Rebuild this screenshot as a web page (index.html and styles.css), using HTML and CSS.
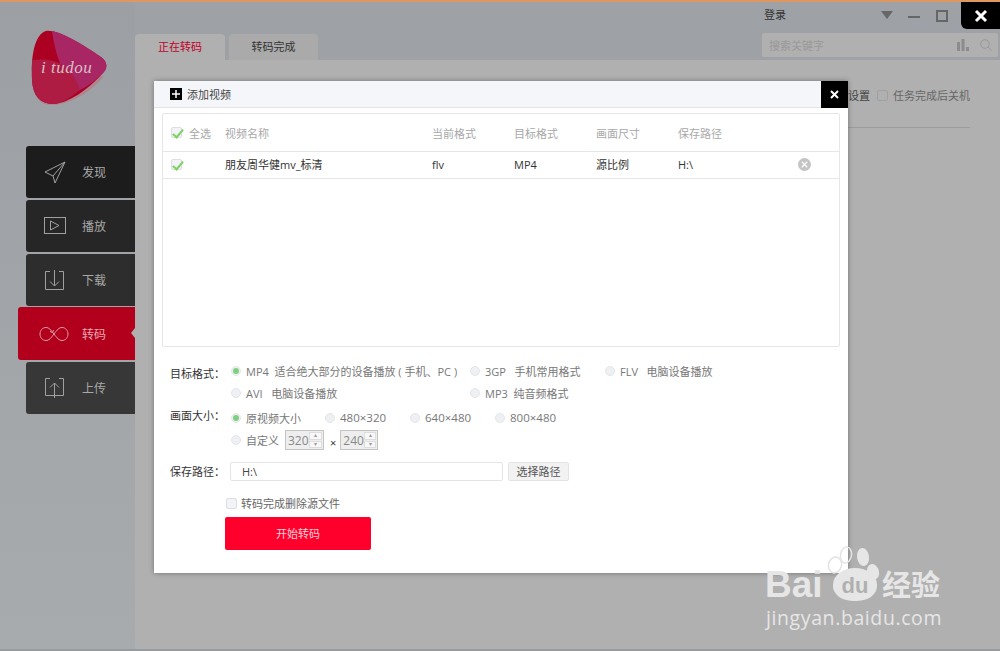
FILE: index.html
```html
<!DOCTYPE html>
<html lang="zh-CN">
<head>
    <meta charset="UTF-8">
    <title>itudou</title>
    <link rel="stylesheet" href="styles.css">
</head>
<body>
    <div class="app">
        <div class="top-line"></div>
        <div class="window">
            <div class="sidebar">
                <div class="logo">
                    <svg width="80" height="80" viewBox="0 0 80 80">
                        <path d="M3 41C1 60 7 75 20 75C36 76 60 64 74 46L40 50Z" fill="#b0868e"/>
                        <path d="M16 1C26 -1 52 14 71 27C78 32 78 39 72 44C58 60 38 73 24 74C10 74 3 66 2 50C1 32 3 5 16 1Z" fill="#ab0022"/>
                        <path d="M22 1C34 3 54 15 71 27C78 32 78 39 72 44C66 50 58 56 50 60C36 52 26 30 22 1Z" fill="#a82664"/>
                        <path d="M2 30C20 28 40 30 50 60C40 68 32 73 24 74C10 74 3 66 2 50Z" fill="#ae1c44"/>
                        <text x="11" y="43" class="logo-text">i tudou</text>
                    </svg>
                </div>
                <div class="nav">
                    <div class="nav-item nav-1">
                        <svg width="24" height="24" viewBox="0 0 24 24" fill="none" stroke="#a0a0a0" stroke-width="1"><path d="M3 12L23 2L13 23L11 16ZM11 16L23 2"/></svg>
                        <span>发现</span>
                    </div>
                    <div class="nav-item nav-2">
                        <svg width="24" height="24" viewBox="0 0 24 24" fill="none" stroke="#a0a0a0" stroke-width="1"><rect x="2.500" y="3.500" width="21" height="16"/><path d="M8.500 7L17 11.500L8.500 16Z"/></svg>
                        <span>播放</span>
                    </div>
                    <div class="nav-item nav-3">
                        <svg width="24" height="24" viewBox="0 0 24 24" fill="none" stroke="#a0a0a0" stroke-width="1"><path d="M8 3.500H3.500V21.500H21.500V3.500H17"/><path d="M12.500 2V18M8 13.500L12.500 18L17 13.500"/></svg>
                        <span>下载</span>
                    </div>
                    <div class="nav-item nav-4 active">
                        <svg width="30" height="24" viewBox="0 0 30 24" fill="none" stroke="#e0a0aa" stroke-width="1"><path d="M15 12C18 8 20 5.500 23 5.500C26.500 5.500 29 8.500 29 12C29 15.500 26.500 18.500 23 18.500C20 18.500 18 16 15 12C12 8 10 5.500 7 5.500C3.500 5.500 1 8.500 1 12C1 15.500 3.500 18.500 7 18.500C10 18.500 12 16 15 12Z"/><path d="M11 9.500L13.500 10.500L14.500 8"/></svg>
                        <span>转码</span>
                        <i class="notch"></i>
                    </div>
                    <div class="nav-item nav-5">
                        <svg width="24" height="24" viewBox="0 0 24 24" fill="none" stroke="#a0a0a0" stroke-width="1"><path d="M8 2.500H3.500V19.500H21.500V2.500H17"/><path d="M12.500 22V7M8 11.500L12.500 7L17 11.500"/></svg>
                        <span>上传</span>
                    </div>
                </div>
            </div>

            <div class="main">
                <div class="topbar">
                    <div class="tabs">
                        <div class="tab active">正在转码</div>
                        <div class="tab">转码完成</div>
                    </div>
                    <div class="top-right">
                        <div class="win-row">
                            <span class="login">登录</span>
                            <i class="ctl-arrow"></i>
                            <i class="ctl-min"></i>
                            <i class="ctl-max"></i>
                            <div class="ctl-close">
                                <svg width="14" height="14" viewBox="0 0 14 14" stroke="#fff" stroke-width="3"><path d="M2 2L12 12M12 2L2 12"/></svg>
                            </div>
                        </div>
                        <div class="search">
                            <span>搜索关键字</span>
                            <svg class="bars" width="12" height="12" viewBox="0 0 12 12" fill="#8c8c8c"><rect x="0" y="3" width="3" height="9"/><rect x="4.500" y="0" width="3" height="12"/><rect x="9" y="8" width="3" height="4"/></svg>
                            <svg width="12" height="12" viewBox="0 0 12 12" fill="none" stroke="#999" stroke-width="1"><circle cx="5" cy="5" r="4.300"/><path d="M8 8L11.500 11.500"/></svg>
                        </div>
                    </div>
                </div>
                <div class="content">
                    <div class="options">
                        <span class="opt-dark">转码设置</span>
                        <i class="box-back"></i>
                        <span>任务完成后关机</span>
                    </div>
                    <div class="options-line"></div>
                </div>
            </div>
        </div>
        <div class="bottom-line"></div>
    </div>

    <div class="dialog">
        <div class="dialog-head">
            <div class="add-video">
                <svg width="12" height="12" viewBox="0 0 12 12"><rect width="12" height="12" fill="#000"/><path d="M6 2V10M2 6H10" stroke="#fff" stroke-width="1.500"/></svg>
                <span>添加视频</span>
            </div>
            <div class="dialog-close">
                <svg width="9" height="9" viewBox="0 0 9 9" stroke="#fff" stroke-width="2"><path d="M1 1L8 8M8 1L1 8"/></svg>
            </div>
        </div>

        <div class="table">
            <div class="row row-head">
                <div class="col-check">
                    <i class="check on"></i>
                    <span>全选</span>
                </div>
                <div class="col-name">视频名称</div>
                <div class="col-fmt">当前格式</div>
                <div class="col-fmt">目标格式</div>
                <div class="col-fmt">画面尺寸</div>
                <div class="col-path">保存路径</div>
            </div>
            <div class="row row-body">
                <div class="col-check">
                    <i class="check on"></i>
                </div>
                <div class="col-name">朋友周华健mv_标清</div>
                <div class="col-fmt">flv</div>
                <div class="col-fmt">MP4</div>
                <div class="col-fmt">源比例</div>
                <div class="col-path">H:\</div>
                <div class="row-del">
                    <svg width="13" height="13" viewBox="0 0 13 13"><circle cx="6.500" cy="6.500" r="6.500" fill="#c4c4c4"/><path d="M3.800 3.800L9.200 9.200M9.200 3.800L3.800 9.200" stroke="#fff" stroke-width="1.300"/></svg>
                </div>
            </div>
        </div>

        <div class="form">
            <div class="form-group group-format">
                <label>目标格式：</label>
                <div class="choices">
                    <div class="choice-row">
                        <div class="choice w-239"><i class="radio on"></i><span>MP4&nbsp; 适合绝大部分的设备播放 ( 手机、PC )</span></div>
                        <div class="choice w-135"><i class="radio"></i><span>3GP&nbsp;&nbsp; 手机常用格式</span></div>
                        <div class="choice"><i class="radio"></i><span>FLV&nbsp;&nbsp; 电脑设备播放</span></div>
                    </div>
                    <div class="choice-row">
                        <div class="choice w-239"><i class="radio"></i><span>AVI&nbsp;&nbsp; 电脑设备播放</span></div>
                        <div class="choice"><i class="radio"></i><span>MP3&nbsp; 纯音频格式</span></div>
                    </div>
                </div>
            </div>
            <div class="form-group group-size">
                <label>画面大小：</label>
                <div class="choices">
                    <div class="choice-row">
                        <div class="choice w-94"><i class="radio on"></i><span>原视频大小</span></div>
                        <div class="choice w-85"><i class="radio"></i><span class="num">480×320</span></div>
                        <div class="choice w-85"><i class="radio"></i><span class="num">640×480</span></div>
                        <div class="choice"><i class="radio"></i><span class="num">800×480</span></div>
                    </div>
                    <div class="choice-row">
                        <div class="choice"><i class="radio"></i><span>自定义</span></div>
                        <div class="spin"><span>320</span><div class="spin-btns"><b>▴</b><b>▾</b></div></div>
                        <span class="times">×</span>
                        <div class="spin"><span>240</span><div class="spin-btns"><b>▴</b><b>▾</b></div></div>
                    </div>
                </div>
            </div>
            <div class="form-group group-path">
                <label>保存路径：</label>
                <div class="path-input">H:\</div>
                <div class="path-btn">选择路径</div>
            </div>
            <div class="delete-source">
                <i class="check"></i>
                <span>转码完成删除源文件</span>
            </div>
            <div class="start-btn">开始转码</div>
        </div>
    </div>

    <div class="watermark">
        <svg class="paw" width="54" height="50" viewBox="0 0 54 50">
            <ellipse cx="8" cy="21" rx="6.500" ry="8" fill="none" stroke="#e4e4e4" stroke-width="1.500" transform="rotate(15 8 21)"/>
            <ellipse cx="19" cy="11" rx="5.500" ry="8" fill="none" stroke="#e4e4e4" stroke-width="1.500" transform="rotate(10 19 11)"/>
            <ellipse cx="36" cy="13" rx="6" ry="9" fill="#e6e6e6" transform="rotate(-8 36 13)"/>
            <ellipse cx="46" cy="28" rx="6" ry="8" fill="#e6e6e6" transform="rotate(-15 46 28)"/>
        </svg>
        <div class="wm-top">
            <span class="wm-bai">Bai</span>
            <span class="wm-du">du</span>
            <span class="wm-cn">经验</span>
        </div>
        <div class="wm-url">jingyan.baidu.com</div>
    </div>
</body>
</html>
```

FILE: styles.css
```css
* {
    margin: 0;
    padding: 0;
    box-sizing: border-box;
    font-family: "Open Sans", "Noto Sans CJK SC", sans-serif;
}

body {
    width: 1000px;
    height: 651px;
    overflow: hidden;
    position: relative;
    background-color: #b0b0b0;
    font-size: 11px;
}

i {
    display: block;
    font-style: normal;
}

.app {
    height: 651px;
    display: flex;
    flex-direction: column;
}

.top-line {
    height: 2px;
    background-color: #df9660;
}

.bottom-line {
    height: 2px;
    background-color: #989b9e;
}

.window {
    flex: 1;
    display: flex;
    min-height: 0;
}

/* left column */
.sidebar {
    width: 135px;
    flex-shrink: 0;
    background: linear-gradient(#9c9fa3, #a7abae);
}

.logo {
    height: 144px;
    padding: 28px 0 0 30px;
}

.logo-text {
    font-family: "Liberation Serif", serif;
    font-style: italic;
    font-size: 17px;
    letter-spacing: 0.5px;
    fill: #d8c0c8;
}

.nav {
    display: flex;
    flex-direction: column;
    gap: 2px;
    align-items: flex-end;
}

.nav-item {
    position: relative;
    width: 109px;
    height: 52px;
    display: flex;
    align-items: center;
    gap: 16px;
    padding-left: 16px;
    color: #a8a8a8;
    font-size: 12px;
    border-radius: 3px 0 0 3px;
}

.nav-1 { background-color: #1c1c1c; }
.nav-2 { background-color: #262626; }
.nav-3 { background-color: #2d2d2d; }
.nav-5 { background-color: #373737; }

.nav-item.active {
    width: 117px;
    height: 53px;
    margin-top: -1px;
    padding-left: 21px;
    gap: 13px;
    color: #e8a8b0;
    background-color: #b2001c;
}

.notch {
    position: absolute;
    right: 0;
    top: 21px;
    border: 5px solid transparent;
    border-right: 4px solid #b0b0b0;
    border-left: 0;
}

/* right column */
.main {
    flex: 1;
    display: flex;
    flex-direction: column;
    background-color: #b0b0b0;
}

.topbar {
    height: 58px;
    display: flex;
    justify-content: space-between;
    background-color: #9ea2a6;
}

.tabs {
    display: flex;
    gap: 4px;
    align-items: flex-end;
}

.tab {
    width: 89px;
    height: 26px;
    line-height: 26px;
    text-align: center;
    color: #333;
    background-color: #aaaaaa;
    border-radius: 4px 4px 0 0;
}

.tab.active {
    width: 90px;
    color: #c2002a;
    background-color: #b0b0b0;
}

.top-right {
    width: 238px;
    display: flex;
    flex-direction: column;
    gap: 4px;
}

.win-row {
    height: 27px;
    display: flex;
    align-items: flex-start;
    padding-left: 2px;
}

.login {
    width: 117px;
    padding-top: 4px;
    color: #333;
    font-size: 11px;
    line-height: 18px;
}

.ctl-arrow {
    margin-top: 9px;
    border: 6px solid transparent;
    border-top: 8px solid #666;
    border-bottom: 0;
}

.ctl-min {
    width: 12px;
    height: 2px;
    margin: 14px 0 0 15px;
    background-color: #666;
}

.ctl-max {
    width: 12px;
    height: 12px;
    margin: 8px 0 0 16px;
    border: 2px solid #666;
}

.ctl-close {
    width: 39px;
    height: 27px;
    margin-left: 13px;
    background-color: #000;
    border-radius: 0 0 0 6px;
    display: flex;
    align-items: center;
    justify-content: center;
}

.search {
    width: 236px;
    height: 24px;
    display: flex;
    align-items: center;
    padding: 0 6px 0 7px;
    color: #999;
    background-color: #b0b0b0;
    border-radius: 2px;
}

.search span {
    flex: 1;
}

.bars {
    margin-right: 11px;
}

.content {
    flex: 1;
    padding: 25px 30px 0 0;
}

.options {
    display: flex;
    justify-content: flex-end;
    align-items: center;
    height: 20px;
    color: #666;
}

.opt-dark {
    color: #444;
}

.box-back {
    width: 11px;
    height: 11px;
    margin: 0 5px 0 7px;
    border: 1px solid #a0a0a0;
    border-radius: 2px;
}

.options-line {
    height: 1px;
    margin: 22px 0 0 660px;
    background-color: #9c9c9c;
}

/* dialog */
.dialog {
    position: absolute;
    left: 154px;
    top: 81px;
    width: 694px;
    height: 492px;
    background-color: #fff;
    box-shadow: 0 0 5px rgba(0, 0, 0, 0.35);
    display: flex;
    flex-direction: column;
}

.dialog-head {
    height: 27px;
    flex-shrink: 0;
    display: flex;
    justify-content: space-between;
    background-color: #f5f6fa;
    border-bottom: 1px solid #e4e4e4;
}

.add-video {
    display: flex;
    align-items: center;
    gap: 5px;
    padding-left: 16px;
    color: #444;
}

.dialog-close {
    width: 27px;
    height: 27px;
    background-color: #000;
    display: flex;
    align-items: center;
    justify-content: center;
}

.table {
    width: 678px;
    height: 234px;
    margin: 5px 0 0 8px;
    flex-shrink: 0;
    border: 1px solid #e6e6e6;
    border-radius: 2px;
}

.row {
    display: flex;
    align-items: center;
    position: relative;
}

.row-head {
    height: 38px;
    color: #a8a8a8;
    border-bottom: 1px solid #e6e6e6;
}

.row-body {
    height: 27px;
    padding-bottom: 2px;
    color: #333;
    border-bottom: 1px solid #e6e6e6;
}

.col-check {
    width: 62px;
    padding-left: 8px;
    display: flex;
    align-items: center;
    gap: 7px;
}

.col-name {
    width: 207px;
}

.col-fmt {
    width: 82px;
}

.col-path {
    flex: 1;
}

.row-del {
    position: absolute;
    left: 635px;
    top: 6px;
    height: 13px;
}

.check {
    width: 11px;
    height: 11px;
    position: relative;
    background-color: #f2f3f7;
    border: 1px solid #dcdee4;
    border-radius: 2px;
}

.check.on::after {
    content: "";
    position: absolute;
    left: 3px;
    top: -1px;
    width: 4px;
    height: 9px;
    border: solid #7ed060;
    border-width: 0 2px 2px 0;
    transform: rotate(40deg);
}

.form {
    flex: 1;
    padding: 9px 0 0 16px;
    color: #666;
}

.form-group {
    display: flex;
}

.form-group label {
    width: 61px;
    flex-shrink: 0;
    color: #333;
    line-height: 26px;
}

.group-format {
    height: 41px;
    margin-top: 5px;
}

.group-size {
    margin-top: 6px;
    height: 45px;
}

.group-size label {
    line-height: 16px;
}

.group-path {
    margin-top: 8px;
    height: 21px;
    align-items: center;
}

.choices {
    display: flex;
    flex-direction: column;
    gap: 3px;
    color: #777;
}

.choice-row {
    display: flex;
    align-items: center;
    height: 19px;
}

.group-size .choice-row + .choice-row {
    height: 20px;
}

.choice {
    display: flex;
    align-items: center;
    gap: 5px;
    white-space: nowrap;
}

.num {
    font-size: 11.500px;
}

.w-239 { width: 239px; }
.w-135 { width: 135px; }
.w-94 { width: 94px; }
.w-85 { width: 85px; }

.radio {
    width: 10px;
    height: 10px;
    border-radius: 50%;
    background-color: #eef0f4;
    border: 1px solid #e4e6ea;
    position: relative;
}

.radio.on::after {
    content: "";
    position: absolute;
    left: 1px;
    top: 1px;
    width: 6px;
    height: 6px;
    border-radius: 50%;
    background-color: #7ed080;
}

.spin {
    width: 39px;
    height: 20px;
    margin-left: 6px;
    display: flex;
    align-items: center;
    justify-content: space-between;
    padding: 0 1px 0 2px;
    color: #888;
    font-size: 12px;
    background-color: #eeeeee;
    border: 1px solid #c4c4c4;
}

.times + .spin {
    width: 38px;
    margin-left: 4px;
}

.spin-btns {
    width: 13px;
    height: 16px;
    display: flex;
    flex-direction: column;
    gap: 1px;
}

.spin-btns b {
    flex: 1;
    background-color: #f8f8f8;
    border: 1px solid #dddddd;
    color: #999;
    font-size: 6px;
    font-weight: normal;
    line-height: 5px;
    text-align: center;
}

.times {
    margin: 5px 0 0 6px;
    color: #333;
    line-height: 14px;
}

.path-input {
    width: 273px;
    height: 19px;
    margin-left: -1px;
    padding-left: 11px;
    line-height: 17px;
    color: #444;
    background-color: #fff;
    border: 1px solid #e4e4e4;
    border-radius: 2px;
}

.path-btn {
    width: 61px;
    height: 19px;
    margin-left: 5px;
    line-height: 17px;
    text-align: center;
    color: #555;
    background-color: #f2f2f2;
    border: 1px solid #e4e4e4;
    border-radius: 2px;
}

.delete-source {
    display: flex;
    align-items: center;
    gap: 4px;
    margin: 13px 0 0 56px;
    height: 16px;
}

.start-btn {
    width: 146px;
    height: 33px;
    margin: 6px 0 0 55px;
    line-height: 33px;
    text-align: center;
    color: #fbd0d8;
    background-color: #ff002c;
    border-radius: 2px;
}

/* baidu watermark */
.watermark {
    position: absolute;
    left: 765px;
    top: 544px;
    width: 180px;
    height: 90px;
    color: #e6e6e6;
}

.paw {
    position: absolute;
    left: 62px;
    top: 0;
}

.wm-top {
    position: absolute;
    left: 0;
    top: 24px;
    display: flex;
    align-items: center;
    height: 33px;
}

.wm-bai {
    font-family: "Liberation Sans", sans-serif;
    font-size: 37px;
    font-weight: bold;
    line-height: 33px;
    width: 68px;
}

.wm-du {
    width: 44px;
    height: 33px;
    border-radius: 50% 50% 45% 45%;
    background-color: #e6e6e6;
    color: #b0b0b0;
    font-family: "Liberation Sans", sans-serif;
    font-size: 22px;
    font-weight: bold;
    line-height: 35px;
    text-align: center;
}

.wm-cn {
    width: 64px;
    margin-left: 5px;
    font-size: 29px;
    font-weight: bold;
    line-height: 33px;
    white-space: nowrap;
}

.wm-url {
    position: absolute;
    left: 1px;
    top: 62px;
    font-size: 19.500px;
    letter-spacing: 0.6px;
    line-height: 24px;
    white-space: nowrap;
}
```
